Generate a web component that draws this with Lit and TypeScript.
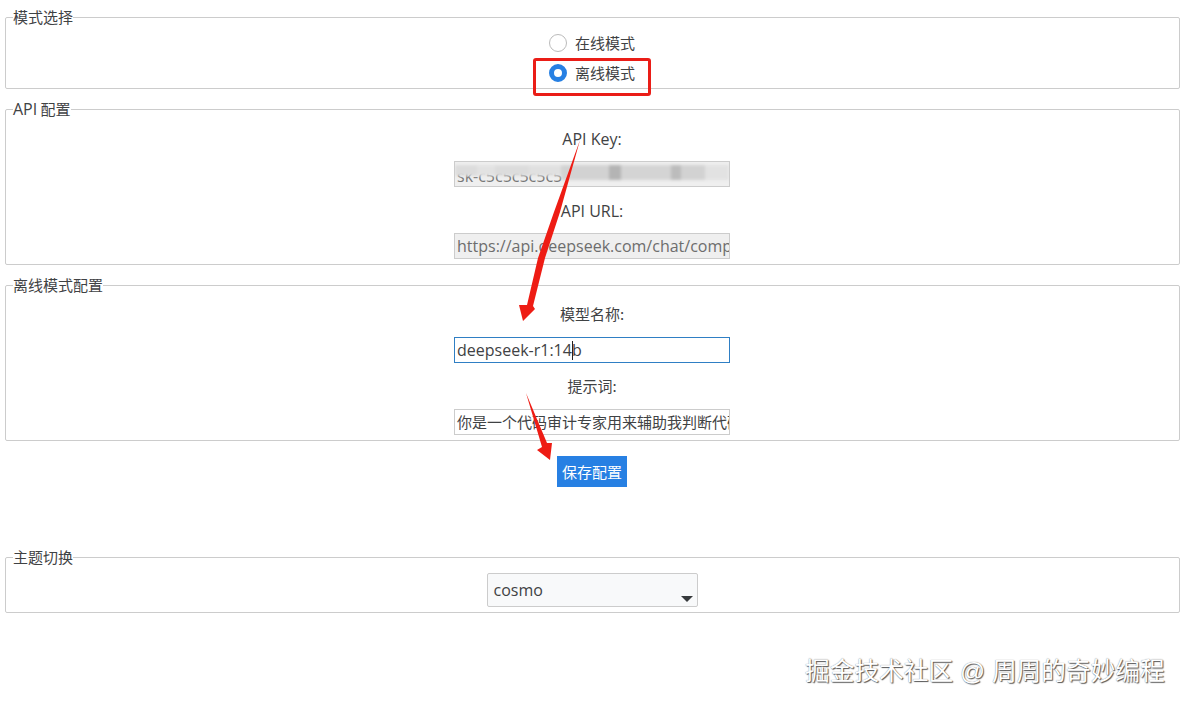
import { LitElement, html, css, svg } from "lit";
import { customElement } from "lit/decorators.js";

@customElement("app-root")
export class AppRoot extends LitElement {
  static styles = css`
    :host {
      display: block;
      position: relative;
      height: 706px;
      box-sizing: border-box;
      padding: 6px 5px 0;
      background: #fff;
      color: #3f4244;
      font: 15px/22px "Noto Sans CJK SC", sans-serif;
      overflow: hidden;
    }
    .en { font-family: "Open Sans", sans-serif; font-size: 16px; }
    fieldset {
      margin: 0 0 9px;
      padding: 0 6px 5px 5px;
      border: 1px solid #ccc;
      border-radius: 2px;
      display: flex;
      flex-direction: column;
      align-items: center;
      min-width: 0;
    }
    legend { margin-left: 2px; padding: 0; line-height: 22px; }
    .radios { display: flex; flex-direction: column; align-items: flex-start; margin-top: 4px; gap: 8px; }
    fieldset.mode { padding-bottom: 4px; }
    .radio { display: flex; align-items: center; gap: 8px; height: 22px; }
    .dot {
      width: 18px; height: 18px; box-sizing: border-box;
      border-radius: 50%; border: 1px solid #bbb; background: #fff;
    }
    .dot.on { border: 5px solid #2780e3; }
    .field { display: flex; flex-direction: column; align-items: center; width: 276px; }
    label { height: 22px; margin-top: 13px; margin-bottom: 11px; }
    .field.tight label { margin-top: 8px; }
    .field label.cjk { margin-top: 12px; margin-bottom: 12px; }
    .field.tight label.cjk { margin-top: 7px; }
    .input {
      box-sizing: border-box; width: 276px; height: 26px;
      border: 1px solid #ccc; padding: 0 2px;
      overflow: hidden; white-space: nowrap;
      line-height: 24px; position: relative;
    }
    .input.dis { background: #efefef; color: #6d6d6d; }
    .input.key { line-height: 29px; color: #777; }
    .input.focus { border-color: #2f7fc4; color: #3f4244; }
    .caret { display: inline-block; width: 1px; height: 19px; background: #222; vertical-align: -4px; margin-right: -1px; }
    .blur { position: absolute; left: 0; right: 0; top: 3px; display: flex; filter: blur(1.5px); }
    .blur span { display: block; height: 15px; background: #d2d2d2; flex: none; }
    .blur .lo { height: 11px; background: #dcdcdc; }
    .save {
      display: block; margin: 15px 0 0 552px; width: 70px; height: 31px;
      border: 0; padding: 0; background: #2780e3; color: #fff;
      font: 15px/31px "Noto Sans CJK SC", sans-serif;
    }
    .spacer { height: 59px; }
    .select {
      box-sizing: border-box; width: 211px; height: 34px; margin-top: 5px;
      border: 1px solid #ccc; border-radius: 2px; background: #f8f9fa;
      padding: 0 6px; line-height: 33px; position: relative;
    }
    .select i {
      position: absolute; right: 4px; bottom: 4px; width: 0; height: 0;
      border-left: 6px solid transparent; border-right: 6px solid transparent;
      border-top: 6px solid #373a3c;
    }
    .mark {
      position: absolute; left: 805px; top: 656px; white-space: nowrap;
      color: #fff; font-size: 24.7px; line-height: 32px;
      text-shadow: 1px 1px 1px #555, 0 0 1px #777;
      font-family: "Liberation Sans", "Noto Sans CJK SC", sans-serif;
    }
    .redbox {
      position: absolute; left: 533px; top: 58px; width: 118px; height: 38px;
      box-sizing: border-box; border: 3px solid #ea1d17; border-radius: 3px;
    }
    svg.ink { position: absolute; left: 0; top: 0; width: 1185px; height: 706px; pointer-events: none; }
  `;

  render() {
    return html`
      <fieldset class="mode">
        <legend>模式选择</legend>
        <div class="radios">
          <div class="radio"><span class="dot"></span>在线模式</div>
          <div class="radio"><span class="dot on"></span>离线模式</div>
        </div>
      </fieldset>
      <fieldset>
        <legend><span class="en">API</span> 配置</legend>
        <div class="field tight">
          <label class="en">API Key:</label>
          <div class="input dis en key">sk-c5c5c5c5c5<div class="blur">
            <span class="lo" style="width:22px"></span><span class="lo" style="width:18px;background:#e2e2e2"></span>
            <span class="lo" style="width:34px"></span><span class="lo" style="width:32px;background:#e0e0e0"></span>
            <span style="width:48px"></span><span style="width:12px;background:#b4b4b4"></span>
            <span style="width:50px;background:#d4d4d4"></span><span style="width:10px;background:#bcbcbc"></span>
            <span style="width:24px;background:#d2d2d2"></span><span style="width:24px;background:#e2e2e2"></span>
          </div></div>
        </div>
        <div class="field">
          <label class="en">API URL:</label>
          <div class="input dis en">https://api.deepseek.com/chat/completions</div>
        </div>
      </fieldset>
      <fieldset>
        <legend>离线模式配置</legend>
        <div class="field tight">
          <label class="cjk">模型名称:</label>
          <div class="input focus en">deepseek-r1:14<span class="caret"></span>b</div>
        </div>
        <div class="field">
          <label class="cjk">提示词:</label>
          <div class="input">你是一个代码审计专家用来辅助我判断代码是否存在漏洞</div>
        </div>
      </fieldset>
      <button class="save">保存配置</button>
      <div class="spacer"></div>
      <fieldset>
        <legend>主题切换</legend>
        <div class="select en">cosmo<i></i></div>
      </fieldset>
      <div class="redbox"></div>
      <svg class="ink" viewBox="0 0 1185 706">
        ${svg`<polygon fill="#ee1c14" points="580,140 560,212 545,258 533,306 535,309 523,321 519,305 527,305 538,258 554,212"/>
        <polygon fill="#ee1c14" points="526,393 547,443 552,443 550,460 537,450 542,447"/>`}
      </svg>
      <div class="mark">掘金技术社区 @ 周周的奇妙编程</div>
    `;
  }
}
